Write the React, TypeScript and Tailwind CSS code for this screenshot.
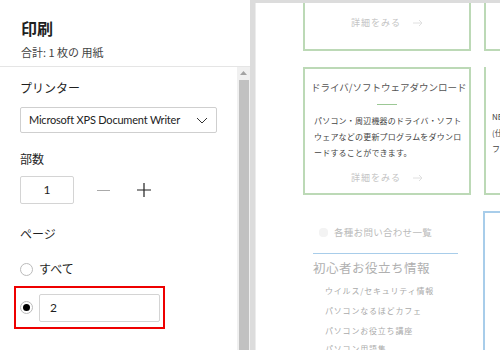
import React from "react";

const jp = { fontFamily: '"Noto Sans CJK JP", "Noto Sans", sans-serif' };
const ui = { fontFamily: 'Lato, "Noto Sans CJK JP", sans-serif' };

function Arrow() {
  return (
    <svg width="10" height="8" viewBox="0 0 10 8" className="ml-3 text-[#e0e0e0]">
      <path d="M0 4h9M6 1l3 3-3 3" fill="none" stroke="currentColor" strokeWidth="1" />
    </svg>
  );
}

function PrintPanel() {
  return (
    <div className="flex h-full w-[250px] shrink-0 flex-col bg-white text-[#1f1f1f]" style={jp}>
      <div className="h-[67px] border-b border-[#e5e5e5] pl-[21px] pr-5 pt-[17px]">
        <div className="text-[16px] font-bold leading-[22px]">印刷</div>
        <div className="mt-[5px] text-[11px] leading-[16px] text-[#444]">合計: 1 枚の 用紙</div>
      </div>
      <div className="flex min-h-0 flex-1">
        <div className="w-[237px] px-5 pt-[12px]">
          <div className="text-[12px] leading-[18px]">プリンター</div>
          <div className="mt-[10px] flex h-[26px] items-center justify-between rounded-[2px] border border-[#cfcfcf] pl-2 pr-2" style={ui}>
            <span className="whitespace-nowrap text-[11px] tracking-[-0.2px] text-[#222]">Microsoft XPS Document Writer</span>
            <svg width="12" height="7" viewBox="0 0 12 7" className="shrink-0">
              <path d="M1 1l5 5 5-5" fill="none" stroke="#333" strokeWidth="1" />
            </svg>
          </div>
          <div className="mt-[17px] text-[12px] leading-[18px]">部数</div>
          <div className="mt-[8px] flex items-center">
            <div className="flex h-[28px] w-[54px] items-center justify-center rounded-[2px] border border-[#d4d4d4] text-[12px]" style={ui}>
              1
            </div>
            <div className="ml-[23px] h-px w-[13px] bg-[#aaa]" />
            <svg width="14" height="14" viewBox="0 0 14 14" className="ml-[27px]">
              <path d="M7 0v14M0 7h14" stroke="#222" strokeWidth="1.2" />
            </svg>
          </div>
          <div className="mt-[21px] text-[12px] leading-[18px]">ページ</div>
          <div className="mt-[17px] flex items-center">
            <div className="h-[13px] w-[13px] rounded-full border border-[#bbb]" />
            <span className="ml-[6px] text-[12px]">すべて</span>
          </div>
          <div className="-ml-[6px] mt-[8px] flex h-[43px] w-[151px] items-center border-[2px] border-[#ee0000] pl-[4px]">
            <div className="flex h-[13px] w-[13px] items-center justify-center rounded-full border border-[#bbb]">
              <div className="h-[7px] w-[7px] rounded-full bg-black" />
            </div>
            <div className="ml-[6px] flex h-[28px] w-[121px] items-center rounded-[2px] border border-[#d4d4d4] pl-[10px] text-[12px]" style={ui}>
              2
            </div>
          </div>
        </div>
        <div className="flex w-[13px] flex-col items-center bg-[#f0f0f0] pt-[4px]">
          <svg width="7" height="4" viewBox="0 0 7 4">
            <path d="M0 4L3.5 0 7 4z" fill="#a3a3a3" />
          </svg>
          <div className="mt-[5px] w-[10px] flex-1 bg-[#c1c1c1]" />
        </div>
      </div>
    </div>
  );
}

function Preview() {
  return (
    <div className="flex-1 bg-[#dcdcdc] pl-[5px] pt-[3px]">
      <div className="h-full border-l border-[#ececec] bg-white pl-[47px] text-[#444]" style={jp}>
        <div className="flex gap-[13px]">
          <div className="flex h-[48px] w-[168px] items-center justify-center border-x-2 border-b-2 border-[#bcd9b6] pb-[6px]">
            <span className="text-[9px] tracking-[1px] text-[#c4c4c4]">詳細をみる</span>
            <Arrow />
          </div>
          <div className="h-[48px] flex-1 border-b-2 border-l-2 border-[#bcd9b6]" />
        </div>
        <div className="mt-[16px] flex gap-[13px]">
          <div className="h-[128px] w-[168px] border-2 border-[#bcd9b6] px-[6px] pt-[11px]">
            <div className="whitespace-nowrap text-center text-[9.5px] leading-[14px] text-[#555]">ドライバ/ソフトウェアダウンロード</div>
            <div className="mx-auto mt-[10px] h-px w-[20px] bg-[#9cc895]" />
            <div className="mt-[8px] whitespace-nowrap pl-[3px] text-[8px] leading-[16px] tracking-[0.2px] text-[#444]">
              <div>パソコン・周辺機器のドライバ・ソフト</div>
              <div>ウェアなどの更新プログラムをダウンロ</div>
              <div>ードすることができます。</div>
            </div>
            <div className="mt-[10px] flex items-center justify-center">
              <span className="text-[9px] tracking-[1px] text-[#c4c4c4]">詳細をみる</span>
              <Arrow />
            </div>
          </div>
          <div className="h-[128px] flex-1 overflow-hidden border-b-2 border-l-2 border-[#bcd9b6] pl-[6px] pt-[42px] text-[8px] leading-[16px] text-[#444]">
            <div>NE</div>
            <div>(仕</div>
            <div>フ</div>
          </div>
        </div>
        <div className="mt-[16px] flex gap-[25px]">
          <div className="w-[155px] pl-[10px]">
            <div className="flex items-center pl-[6px] pt-[14px] text-[9.5px] leading-[14px] tracking-[0.3px] text-[#bbb]">
              <span className="mr-[6px] inline-block h-[9px] w-[9px] rounded-sm bg-[#f3f3f3]" />
              各種お問い合わせ一覧
            </div>
            <div className="mt-[14px] h-px bg-[#a8cdea]" />
            <div className="mt-[5px] text-[12.5px] leading-[18px] tracking-[0.5px] text-[#b0b0b0]">初心者お役立ち情報</div>
            <div className="pl-[12px] text-[8px] tracking-[0.8px] text-[#aaa]">
              <div className="mt-[8px] leading-[12px]">ウイルス/セキュリティ情報</div>
              <div className="mt-[8px] leading-[12px]">パソコンなるほどカフェ</div>
              <div className="mt-[8px] leading-[12px]">パソコンお役立ち講座</div>
              <div className="mt-[6px] leading-[12px]">パソコン用語集</div>
            </div>
          </div>
          <div className="h-[200px] flex-1 border-l-2 border-t-2 border-[#a8cdea]" />
        </div>
      </div>
    </div>
  );
}

export default function App() {
  return (
    <div className="flex h-[350px] w-[500px] overflow-hidden">
      <PrintPanel />
      <Preview />
    </div>
  );
}
